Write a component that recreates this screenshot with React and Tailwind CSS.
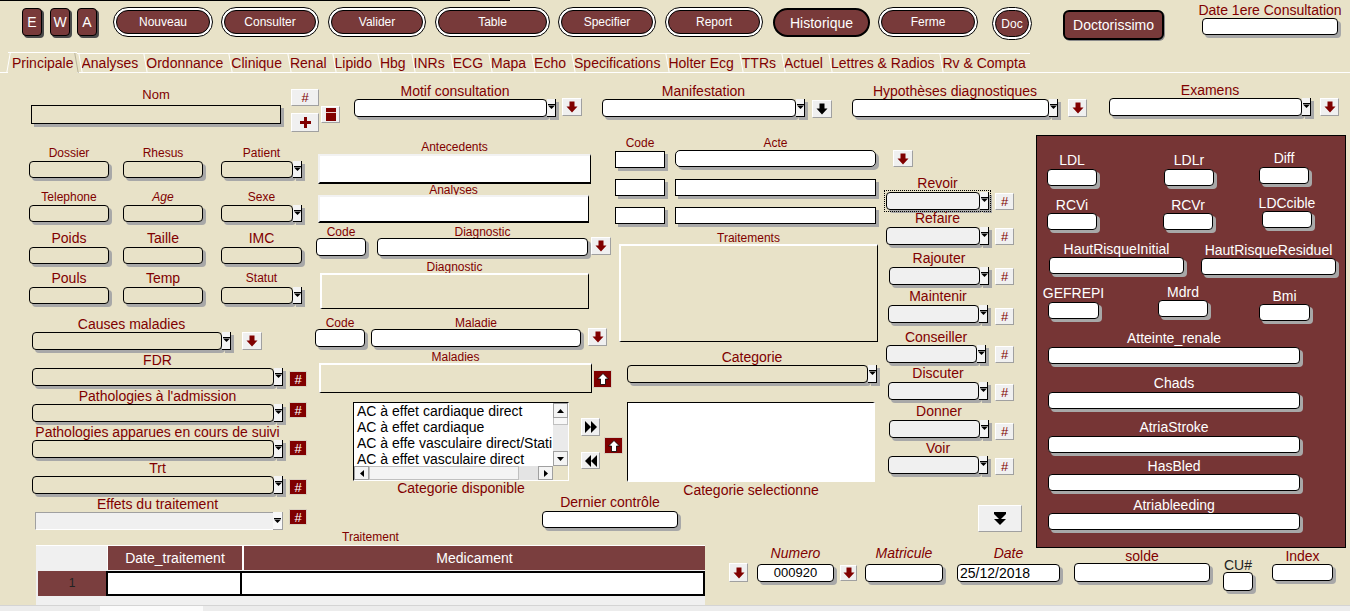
import React from 'react';

const SH = 'shadow-[3px_3px_0_#a8a8a8]';

function Tri() {
  return (
    <svg width="7" height="5" viewBox="0 0 7 5" className="block">
      <rect x="0" y="0" width="7" height="1" fill="#000" />
      <polygon points="0,1.5 7,1.5 3.5,5" fill="#000" />
    </svg>
  );
}

function Combo({ className = '', fill = 'bg-white' }) {
  return (
    <div className={`flex shrink-0 ${className}`}>
      <div className={`flex-1 border border-black rounded-[4px] ${SH} ${fill}`} />
      <div className="w-[9px] flex flex-col items-center pt-[5px] bg-[#f4f4f4] border-r border-b border-black shadow-[3px_3px_0_#a8a8a8]">
        <Tri />
      </div>
    </div>
  );
}

function Down({ color = '#800000' }) {
  return (
    <svg width="12" height="12" viewBox="0 0 12 12" className="block">
      <polygon points="3.5,0.5 8.5,0.5 8.5,5.5 11.5,5.5 6,11.5 0.5,5.5 3.5,5.5" fill={color} />
    </svg>
  );
}

function ArrowBtn({ className = '', color }) {
  return (
    <div className={`shrink-0 flex items-center justify-center bg-[#f0f0f0] border border-white border-r-[#a0a0a0] border-b-[#a0a0a0] ${className}`}>
      <Down color={color} />
    </div>
  );
}

function HashL({ className = '' }) {
  return (
    <div className={`shrink-0 flex items-center justify-center bg-[#f0f0f0] text-[#800000] text-[13px] leading-none border border-white border-r-[#a0a0a0] border-b-[#a0a0a0] ${className}`}>#</div>
  );
}

function HashR({ className = '' }) {
  return (
    <div className={`shrink-0 flex items-center justify-center bg-[#800000] text-white text-[13px] leading-none border border-[#d8d0c0] ${className}`}>#</div>
  );
}

function UpBtn({ className = '' }) {
  return (
    <div className={`shrink-0 flex items-center justify-center bg-[#800000] border border-[#d8d0c0] ${className}`}>
      <svg width="12" height="12" viewBox="0 0 12 12" className="block">
        <polygon points="6,0.5 11.5,6 8.5,6 8.5,11.5 3.5,11.5 3.5,6 0.5,6" fill="#fff" stroke="#000" strokeWidth="0.8" />
      </svg>
    </div>
  );
}

function DblBtn({ className = '', dir }) {
  return (
    <div className={`shrink-0 flex items-center justify-center bg-[#f0f0f0] border border-white border-r-[#a0a0a0] border-b-[#a0a0a0] ${className}`}>
      {dir === 'r' ? (
        <svg width="12" height="12" viewBox="0 0 12 12" className="block">
          <polygon points="0,0 6,6 0,12" fill="#000" />
          <polygon points="6,0 12,6 6,12" fill="#000" />
        </svg>
      ) : (
        <svg width="12" height="12" viewBox="0 0 12 12" className="block">
          <polygon points="12,0 6,6 12,12" fill="#000" />
          <polygon points="6,0 0,6 6,12" fill="#000" />
        </svg>
      )}
    </div>
  );
}

function Key({ className = '', children }) {
  return (
    <div className={`shrink-0 mt-[7px] w-[20px] h-[28px] rounded-[4px] border border-black bg-[#783a3a] text-white text-[14px] flex items-center justify-center shadow-[2px_2px_0_#4a4a4a] ${className}`}>{children}</div>
  );
}

function Pill({ className = '', children }) {
  return (
    <div className={`shrink-0 mt-[6px] rounded-full border border-black bg-white p-[2px] ${className}`}>
      <div className="h-full rounded-full border border-black bg-[#783a3a] flex items-center justify-center text-white text-[12px]">{children}</div>
    </div>
  );
}

function Stack({ className = '', label, lc = '', ic = '' }) {
  return (
    <div className={`shrink-0 flex flex-col items-center ${className}`}>
      <div className={`h-[16px] leading-[16px] whitespace-nowrap ${lc}`}>{label}</div>
      <div className={`w-full shrink-0 border border-black rounded-[4px] bg-white ${SH} ${ic}`} />
    </div>
  );
}

function WideCombo({ className = '', label, hash }) {
  return (
    <div className={`flex items-start ${className}`}>
      <div className="ml-[3px] w-[251px] flex flex-col">
        <div className="h-[16px] flex justify-center whitespace-nowrap">{label}</div>
        <Combo className="h-[18px]" fill="bg-[#e8e2c8]" />
      </div>
      <HashR className={`ml-[6px] w-[18px] h-[16px] -mb-[4px] ${hash}`} />
    </div>
  );
}

function RCombo({ className = '', sc = '', label, hc = '', cc = '', focus }) {
  return (
    <div className={`flex items-start ${className}`}>
      <div className={`flex flex-col shrink-0 ${sc}`}>
        <div className="h-[16px] flex justify-center whitespace-nowrap">{label}</div>
        <div className={focus ? 'outline-1 outline-dotted outline-black outline-offset-1 mt-[1px]' : cc}>
          <Combo className="h-[18px]" fill="bg-[#f0f0f0]" />
        </div>
      </div>
      <HashL className={`w-[19px] h-[17px] -mb-[4px] ${hc}`} />
    </div>
  );
}

export default function App() {
  const tabs = ['Analyses', 'Ordonnance', 'Clinique', 'Renal', 'Lipido', 'Hbg', 'INRs', 'ECG', 'Mapa', 'Echo', 'Specifications', 'Holter Ecg', 'TTRs', 'Actuel', 'Lettres & Radios', 'Rv & Compta'];
  const inBeige = `h-[17px] rounded-[4px] border border-black bg-[#e8e2c8] ${SH}`;
  const inWhiteR = `h-[18px] rounded-[4px] border border-black bg-white ${SH}`;
  const label12 = 'h-[14px] text-[12px] leading-[14px] text-center whitespace-nowrap';
  return (
    <div className="w-[1350px] h-[611px] overflow-hidden bg-[#e8e2c8] font-['Liberation_Sans',Arial,sans-serif] text-[14px] leading-[16px] text-[#800000] flex flex-col">
      {/* toolbar */}
      <div className="h-[48px] shrink-0">
        <div className="h-px w-[510px] bg-black" />
        <div className="flex items-start">
          <Key className="ml-[22px]">E</Key>
          <Key className="ml-[8px]">W</Key>
          <Key className="ml-[7px]">A</Key>
          <Pill className="ml-[16px] w-[100px] h-[30px]">Nouveau</Pill>
          <Pill className="ml-[8px] w-[98px] h-[30px]">Consulter</Pill>
          <Pill className="ml-[9px] w-[98px] h-[30px]">Valider</Pill>
          <Pill className="ml-[9px] w-[115px] h-[30px]">Table</Pill>
          <Pill className="ml-[8px] w-[98px] h-[30px]">Specifier</Pill>
          <Pill className="ml-[9px] w-[98px] h-[30px]">Report</Pill>
          <div className="shrink-0 ml-[10px] mt-[7px] w-[97px] h-[29px] rounded-full border-2 border-black bg-[#783a3a] text-white text-[14px] flex items-center justify-center">Historique</div>
          <Pill className="ml-[8px] w-[100px] h-[30px]">Ferme</Pill>
          <Pill className="ml-[14px] w-[40px] h-[33px]">Doc</Pill>
          <div className="shrink-0 ml-[31px] mt-[9px] w-[101px] h-[30px] rounded-[6px] border-2 border-black bg-[#783a3a] text-white text-[14px] flex items-center justify-center shadow-[1px_1px_0_#8a8a8a]">Doctorissimo</div>
          <div className="shrink-0 ml-[33px] mt-[1px] w-[146px] flex flex-col items-center">
            <div className="h-[16px] whitespace-nowrap">Date 1ere Consultation</div>
            <div className={`w-[136px] h-[17px] rounded-[4px] border border-black bg-white ${SH}`} />
          </div>
        </div>
      </div>

      {/* tabs */}
      <div className="h-[25px] shrink-0 flex items-end pl-[8px] border-b border-white">
        <div className="relative h-[21px] -mb-px pt-[2px] px-[4px] bg-[#e8e2c8] border-t border-white whitespace-nowrap">
          Principale
          <span className="absolute left-0 top-0 h-full w-px bg-white -skew-x-[10deg]" />
          <span className="absolute right-0 top-0 h-full w-px bg-[#b8b29a] skew-x-[10deg]" />
        </div>
        {tabs.map((t) => (
          <div key={t} className="relative h-[19px] pt-[1px] px-[4px] border-t border-white whitespace-nowrap">
            {t}
            <span className="absolute left-[3px] top-0 h-full w-px bg-white skew-x-[10deg]" />
          </div>
        ))}
      </div>

      {/* content */}
      <div className="h-[532px] shrink-0 flex">
        {/* left part */}
        <div className="w-[1036px] shrink-0 flex flex-col">
          {/* row 1 */}
          <div className="h-[62px] shrink-0 flex items-start">
            <div className="shrink-0 ml-[31px] mt-[14px] w-[250px] flex flex-col">
              <div className="h-[16px] text-center text-[13px]">Nom</div>
              <div className={`mt-[2px] h-[19px] border border-black bg-[#e8e2c8] ${SH}`} />
            </div>
            <div className="shrink-0 ml-[10px] mt-[16px] w-[28px] flex flex-col">
              <HashL className="h-[17px]" />
              <div className="mt-[7px] h-[19px] bg-[#f0f0f0] border border-white border-r-[#a0a0a0] border-b-[#a0a0a0] flex items-center justify-center">
                <svg width="11" height="11" viewBox="0 0 11 11" className="block">
                  <rect x="4" y="0" width="3" height="11" fill="#800000" />
                  <rect x="0" y="4" width="11" height="3" fill="#800000" />
                </svg>
              </div>
            </div>
            <div className="shrink-0 ml-[2px] mt-[33px] w-[19px] h-[17px] bg-[#f0f0f0] border border-white border-r-[#a0a0a0] border-b-[#a0a0a0] flex items-center justify-center">
              <svg width="10" height="13" viewBox="0 0 10 13" className="block">
                <rect width="10" height="13" fill="#800000" />
                <rect x="0" y="4" width="10" height="1" fill="#e8c8c8" />
              </svg>
            </div>
            <div className="shrink-0 ml-[14px] mt-[10px] w-[202px] flex flex-col">
              <div className="h-[16px] flex justify-center whitespace-nowrap">Motif consultation</div>
              <Combo className="h-[18px]" fill="bg-white" />
            </div>
            <ArrowBtn className="ml-[6px] mt-[25px] w-[20px] h-[18px]" />
            <div className="shrink-0 ml-[20px] mt-[10px] w-[203px] flex flex-col">
              <div className="h-[16px] flex justify-center whitespace-nowrap">Manifestation</div>
              <Combo className="h-[18px]" fill="bg-white" />
            </div>
            <ArrowBtn className="ml-[7px] mt-[27px] w-[20px] h-[18px]" color="#000" />
            <div className="shrink-0 ml-[20px] mt-[10px] w-[206px] flex flex-col">
              <div className="h-[16px] flex justify-center whitespace-nowrap">Hypothèses diagnostiques</div>
              <Combo className="h-[18px]" fill="bg-white" />
            </div>
            <ArrowBtn className="ml-[10px] mt-[26px] w-[19px] h-[18px]" />
          </div>

          {/* row 2 */}
          <div className="h-[393px] shrink-0 flex items-start">
            {/* col A */}
            <div className="ml-[29px] w-[280px] shrink-0 flex flex-col">
              <div className="mt-[10px] flex items-start">
                <div className="w-[80px] shrink-0 flex flex-col">
                  <div className="h-[16px] text-[12px] text-center">Dossier</div>
                  <div className={inBeige} />
                </div>
                <div className="ml-[14px] w-[80px] shrink-0 flex flex-col">
                  <div className="h-[16px] text-[12px] text-center">Rhesus</div>
                  <div className={inBeige} />
                </div>
                <div className="ml-[18px] w-[81px] shrink-0 flex flex-col">
                  <div className="h-[16px] text-[12px] text-center">Patient</div>
                  <Combo className="h-[17px]" fill="bg-[#e8e2c8]" />
                </div>
              </div>
              <div className="mt-[11px] flex items-start">
                <div className="w-[80px] shrink-0 flex flex-col">
                  <div className="h-[16px] text-[12px] text-center">Telephone</div>
                  <div className={inBeige} />
                </div>
                <div className="ml-[14px] w-[80px] shrink-0 flex flex-col">
                  <div className="h-[16px] text-[12px] text-center italic">Age</div>
                  <div className={inBeige} />
                </div>
                <div className="ml-[18px] w-[81px] shrink-0 flex flex-col">
                  <div className="h-[16px] text-[12px] text-center">Sexe</div>
                  <Combo className="h-[17px]" fill="bg-[#e8e2c8]" />
                </div>
              </div>
              <div className="mt-[8px] flex items-start">
                <div className="w-[80px] shrink-0 flex flex-col">
                  <div className="h-[16px] text-center">Poids</div>
                  <div className={`mt-[1px] ${inBeige}`} />
                </div>
                <div className="ml-[14px] w-[80px] shrink-0 flex flex-col">
                  <div className="h-[16px] text-center">Taille</div>
                  <div className={`mt-[1px] ${inBeige}`} />
                </div>
                <div className="ml-[18px] w-[81px] shrink-0 flex flex-col">
                  <div className="h-[16px] text-center">IMC</div>
                  <div className={`mt-[1px] ${inBeige}`} />
                </div>
              </div>
              <div className="mt-[6px] flex items-start">
                <div className="w-[80px] shrink-0 flex flex-col">
                  <div className="h-[16px] text-center">Pouls</div>
                  <div className={`mt-[1px] ${inBeige}`} />
                </div>
                <div className="ml-[14px] w-[80px] shrink-0 flex flex-col">
                  <div className="h-[16px] text-center">Temp</div>
                  <div className={`mt-[1px] ${inBeige}`} />
                </div>
                <div className="ml-[18px] w-[81px] shrink-0 flex flex-col">
                  <div className="h-[16px] text-[12px] text-center">Statut</div>
                  <Combo className="mt-[1px] h-[17px]" fill="bg-[#e8e2c8]" />
                </div>
              </div>
              <div className="mt-[12px] flex items-start">
                <div className="ml-[3px] w-[199px] shrink-0 flex flex-col">
                  <div className="h-[16px] flex justify-center whitespace-nowrap">Causes maladies</div>
                  <Combo className="h-[18px]" fill="bg-[#e8e2c8]" />
                </div>
                <ArrowBtn className="ml-[11px] mt-[16px] w-[20px] h-[18px]" />
              </div>
              <WideCombo className="mt-[2px]" label="FDR" hash="mt-[19px]" />
              <WideCombo className="mt-[2px]" label="Pathologies à l'admission" hash="mt-[14px]" />
              <WideCombo className="mt-[2px]" label="Pathologies apparues en cours de suivi" hash="mt-[16px]" />
              <WideCombo className="mt-[2px]" label="Trt" hash="mt-[19px]" />
              <div className="mt-[2px] flex items-start">
                <div className="ml-[3px] w-[251px] shrink-0 flex flex-col">
                  <div className="h-[16px] flex justify-center whitespace-nowrap">Effets du traitement</div>
                  <div className="ml-[3px] h-[18px] flex">
                    <div className="flex-1 bg-[#f0f0f0] border-t border-l border-[#a0a0a0] border-b border-b-white" />
                    <div className="w-[10px] flex flex-col items-center pt-[6px] bg-[#f8f8f8] border-b border-r border-[#a0a0a0]">
                      <Tri />
                    </div>
                  </div>
                </div>
                <HashR className="ml-[6px] mt-[13px] w-[18px] h-[16px]" />
              </div>
            </div>

            {/* col B */}
            <div className="ml-[6px] w-[300px] shrink-0 flex flex-col">
              <div className="mt-[5px] ml-[3px] w-[273px] flex flex-col">
                <div className={label12}>Antecedents</div>
                <div className="h-[30px] bg-white border-t-2 border-l-2 border-[#f2f2f2] border-r border-b-2 border-r-black border-b-black" />
              </div>
              <div className="-mt-[1px] ml-[3px] w-[271px] flex flex-col relative">
                <div className={label12}>Analyses</div>
                <div className="-mt-[2px] h-[28px] bg-white border-t-2 border-l-2 border-[#f2f2f2] border-r border-b-2 border-r-black border-b-black" />
              </div>
              <div className="mt-[2px] flex items-start">
                <div className="ml-[1px] w-[50px] shrink-0 flex flex-col">
                  <div className={label12}>Code</div>
                  <div className={`-mt-[1px] ${inWhiteR}`} />
                </div>
                <div className="ml-[11px] w-[211px] shrink-0 flex flex-col">
                  <div className={label12}>Diagnostic</div>
                  <div className={`-mt-[1px] ${inWhiteR}`} />
                </div>
                <ArrowBtn className="ml-[3px] mt-[12px] w-[20px] h-[18px]" />
              </div>
              <div className="mt-[4px] ml-[5px] w-[269px] flex flex-col">
                <div className={label12}>Diagnostic</div>
                <div className="-mt-[1px] h-[36px] bg-[#e8e2c8] border-t-2 border-l-2 border-white border-r border-b border-r-black border-b-black" />
              </div>
              <div className="mt-[7px] flex items-start">
                <div className="w-[50px] shrink-0 flex flex-col">
                  <div className={label12}>Code</div>
                  <div className={`-mt-[1px] ${inWhiteR}`} />
                </div>
                <div className="ml-[6px] w-[210px] shrink-0 flex flex-col">
                  <div className={label12}>Maladie</div>
                  <div className={`-mt-[1px] ${inWhiteR}`} />
                </div>
                <ArrowBtn className="ml-[7px] mt-[12px] w-[19px] h-[18px]" />
              </div>
              <div className="mt-[3px] flex items-start">
                <div className="ml-[4px] w-[273px] shrink-0 flex flex-col">
                  <div className={label12}>Maladies</div>
                  <div className="-mt-[1px] h-[30px] bg-[#e8e2c8] border-t-2 border-l-2 border-white border-r border-b border-r-black border-b-black" />
                </div>
                <UpBtn className="ml-[1px] mt-[20px] w-[19px] h-[18px]" />
              </div>
              <div className="mt-[9px] flex items-start">
                <div className="ml-[38px] w-[216px] h-[79px] shrink-0 flex flex-col bg-white border-t border-l border-black border-r border-b border-r-white border-b-white">
                  <div className="flex flex-1 min-h-0">
                    <div className="flex-1 min-w-0 overflow-hidden whitespace-nowrap pl-[3px] text-black text-[14px] leading-[16px]">
                      <div>AC à effet cardiaque direct</div>
                      <div>AC à effet cardiaque</div>
                      <div>AC à effe vasculaire direct/Stati</div>
                      <div>AC à effet vasculaire direct</div>
                    </div>
                    <div className="w-[15px] shrink-0 flex flex-col bg-[#eaeaea]">
                      <div className="h-[15px] bg-[#f4f4f4] border border-[#a0a0a0] flex items-center justify-center">
                        <svg width="7" height="4" viewBox="0 0 7 4" className="block"><polygon points="0,4 7,4 3.5,0" fill="#000" /></svg>
                      </div>
                      <div className="h-[7px] bg-[#f8f8f8] border-x border-b border-[#c0c0c0]" />
                      <div className="flex-1" />
                      <div className="h-[15px] bg-[#f4f4f4] border border-[#a0a0a0] flex items-center justify-center">
                        <svg width="7" height="4" viewBox="0 0 7 4" className="block"><polygon points="0,0 7,0 3.5,4" fill="#000" /></svg>
                      </div>
                    </div>
                  </div>
                  <div className="h-[14px] shrink-0 flex">
                    <div className="w-[15px] bg-[#f4f4f4] border border-[#a0a0a0] flex items-center justify-center">
                      <svg width="4" height="7" viewBox="0 0 4 7" className="block"><polygon points="4,0 4,7 0,3.5" fill="#000" /></svg>
                    </div>
                    <div className="w-[150px] bg-[#f4f4f4] border border-[#c0c0c0]" />
                    <div className="flex-1 bg-[#e4e4e4]" />
                    <div className="w-[15px] bg-[#f4f4f4] border border-[#a0a0a0] flex items-center justify-center">
                      <svg width="4" height="7" viewBox="0 0 4 7" className="block"><polygon points="0,0 0,7 4,3.5" fill="#000" /></svg>
                    </div>
                    <div className="w-[15px] bg-[#e8e2c8]" />
                  </div>
                </div>
                <div className="ml-[12px] shrink-0 flex flex-col">
                  <DblBtn className="mt-[16px] w-[19px] h-[18px]" dir="r" />
                  <DblBtn className="mt-[16px] w-[19px] h-[17px]" dir="l" />
                </div>
                <UpBtn className="ml-[4px] mt-[35px] w-[19px] h-[17px]" />
              </div>
              <div className="-mt-[1px] ml-[38px] w-[216px] h-[16px] flex justify-center whitespace-nowrap">Categorie disponible</div>
              <div className="-mt-[2px] ml-[227px] w-[136px] shrink-0 flex flex-col">
                <div className="h-[16px] flex justify-center whitespace-nowrap">Dernier contrôle</div>
                <div className={`mt-[1px] h-[17px] rounded-[4px] border border-black bg-white ${SH}`} />
              </div>
            </div>

            {/* col C */}
            <div className="w-[271px] shrink-0 flex flex-col">
              <div className="mt-[1px] flex items-start">
                <div className="w-[50px] shrink-0 flex flex-col">
                  <div className={label12}>Code</div>
                  <div className={`mt-[1px] h-[17px] border border-black bg-white ${SH}`} />
                  <div className={`mt-[11px] h-[17px] border border-black bg-white ${SH}`} />
                  <div className={`mt-[11px] h-[17px] border border-black bg-white ${SH}`} />
                </div>
                <div className="ml-[10px] w-[201px] shrink-0 flex flex-col">
                  <div className={label12}>Acte</div>
                  <div className={`h-[17px] rounded-[5px] border border-black bg-white ${SH}`} />
                  <div className={`mt-[12px] h-[17px] border border-black bg-white ${SH}`} />
                  <div className={`mt-[11px] h-[17px] border border-black bg-white ${SH}`} />
                </div>
              </div>
              <div className="mt-[7px] ml-[4px] w-[259px] flex flex-col">
                <div className={label12}>Traitements</div>
                <div className="-mt-[1px] h-[98px] bg-[#e8e2c8] border-t-2 border-l-2 border-white border-r border-b border-r-black border-b-black" />
              </div>
              <div className="mt-[7px] ml-[12px] w-[250px] flex flex-col">
                <div className="h-[16px] flex justify-center whitespace-nowrap">Categorie</div>
                <Combo className="h-[18px]" fill="bg-[#e8e2c8]" />
              </div>
              <div className="mt-[19px] ml-[12px] w-[248px] h-[80px] bg-white border-t border-l border-black border-r-2 border-b-2 border-r-white border-b-white" />
              <div className="ml-[12px] w-[248px] h-[16px] flex justify-center whitespace-nowrap">Categorie selectionne</div>
            </div>

            {/* col D */}
            <div className="w-[150px] shrink-0 flex flex-col">
              <ArrowBtn className="ml-[7px] mt-[15px] w-[20px] h-[17px]" />
              <RCombo className="mt-[8px]" sc="w-[103px]" label="Revoir" hc="ml-[6px] mt-[18px]" focus />
              <RCombo className="mt-0" sc="w-[103px]" label="Refaire" cc="mt-[1px]" hc="ml-[6px] mt-[18px]" />
              <RCombo className="mt-[5px]" sc="ml-[3px] w-[100px]" label="Rajouter" cc="mt-[1px]" hc="ml-[6px] mt-[18px]" />
              <RCombo className="mt-[3px]" sc="ml-[2px] w-[100px]" label="Maintenir" cc="mt-[1px]" hc="ml-[7px] mt-[20px]" />
              <RCombo className="mt-[6px]" sc="w-[100px]" label="Conseiller" cc="mt-0" hc="ml-[9px] mt-[17px]" />
              <RCombo className="mt-[2px]" sc="ml-[2px] w-[100px]" label="Discuter" cc="mt-[1px]" hc="ml-[7px] mt-[19px]" />
              <RCombo className="mt-[3px]" sc="ml-[3px] w-[100px]" label="Donner" cc="mt-[1px]" hc="ml-[6px] mt-[20px]" />
              <RCombo className="mt-[2px]" sc="ml-[2px] w-[100px]" label="Voir" cc="mt-0" hc="ml-[7px] mt-[18px]" />
              <div className="ml-[92px] mt-[31px] w-[44px] h-[27px] bg-[#f0f0f0] border border-white border-r-[#a0a0a0] border-b-[#a0a0a0] flex items-center justify-center">
                <svg width="14" height="14" viewBox="0 0 14 14" className="block">
                  <rect x="1" y="0" width="12" height="2" fill="#000" />
                  <polygon points="1,2 13,2 7,8" fill="#000" />
                  <polygon points="1,7 13,7 7,13" fill="#000" />
                </svg>
              </div>
            </div>
          </div>

          {/* row 3 */}
          <div className="h-[77px] shrink-0 flex items-start">
            <div className="ml-[36px] w-[669px] shrink-0 flex flex-col">
              <div className={`mt-[2px] ${label12}`}>Traitement</div>
              <div className="mt-[1px] h-[60px] bg-[#f0f0f0] border-t border-white flex flex-col">
                <div className="h-[24px] flex">
                  <div className="w-[71px]" />
                  <div className="w-[135px] bg-[#7a3e3e] border-l border-white text-white text-center leading-[24px]">Date_traitement</div>
                  <div className="flex-1 bg-[#7a3e3e] border-l-2 border-white text-white text-center leading-[24px]">Medicament</div>
                </div>
                <div className="mt-px h-[25px] flex">
                  <div className="ml-[2px] w-[68px] bg-[#7a3e3e] text-[#222] text-[12px] text-center leading-[25px]">1</div>
                  <div className="w-[136px] bg-white border-2 border-black" />
                  <div className="flex-1 bg-white border-y-2 border-r-2 border-black" />
                </div>
              </div>
            </div>
            <ArrowBtn className="ml-[24px] mt-[35px] w-[19px] h-[19px]" />
            <div className="ml-[9px] mt-[17px] w-[77px] shrink-0 flex flex-col">
              <div className="h-[16px] text-center italic">Numero</div>
              <div className={`mt-[3px] h-[18px] rounded-[4px] border border-black bg-white text-black text-[13px] leading-[16px] text-center ${SH}`}>000920</div>
            </div>
            <ArrowBtn className="ml-[6px] mt-[37px] w-[17px] h-[16px]" />
            <div className="ml-[8px] mt-[17px] w-[78px] shrink-0 flex flex-col">
              <div className="h-[16px] text-center italic">Matricule</div>
              <div className={`mt-[3px] h-[18px] rounded-[4px] border border-black bg-white ${SH}`} />
            </div>
            <div className="ml-[14px] mt-[17px] w-[103px] shrink-0 flex flex-col">
              <div className="h-[16px] text-center italic">Date</div>
              <div className={`mt-[3px] h-[18px] rounded-[4px] border border-black bg-white text-black text-[14px] leading-[16px] pl-[2px] ${SH}`}>25/12/2018</div>
            </div>
          </div>
        </div>

        {/* right part */}
        <div className="w-[314px] shrink-0 flex flex-col">
          <div className="h-[62px] shrink-0 flex items-start">
            <div className="shrink-0 ml-[73px] mt-[9px] w-[202px] flex flex-col">
              <div className="h-[16px] flex justify-center whitespace-nowrap">Examens</div>
              <Combo className="h-[18px]" fill="bg-white" />
            </div>
            <ArrowBtn className="ml-[9px] mt-[25px] w-[19px] h-[18px]" />
          </div>

          <div className="w-[310px] h-[413px] shrink-0 bg-[#763535] border border-black text-white flex flex-col">
            <div className="flex items-start">
              <Stack className="ml-[10px] mt-[16px] w-[50px]" label="LDL" ic="mt-[1px] h-[17px]" />
              <Stack className="ml-[67px] mt-[16px] w-[50px]" label="LDLr" ic="mt-[1px] h-[17px]" />
              <Stack className="ml-[45px] mt-[14px] w-[50px]" label="Diff" ic="mt-[1px] h-[17px]" />
            </div>
            <div className="flex items-start">
              <Stack className="ml-[10px] mt-[11px] w-[50px]" label="RCVi" ic="h-[17px]" />
              <Stack className="ml-[66px] mt-[11px] w-[50px]" label="RCVr" ic="h-[17px]" />
              <Stack className="ml-[49px] mt-[9px] w-[50px]" label="LDCcible" ic="h-[17px]" />
            </div>
            <div className="flex items-start">
              <Stack className="ml-[12px] mt-[11px] w-[135px]" label="HautRisqueInitial" ic="h-[17px]" />
              <Stack className="ml-[17px] mt-[12px] w-[135px]" label="HautRisqueResiduel" ic="h-[17px]" />
            </div>
            <div className="flex items-start">
              <Stack className="ml-[11px] mt-[10px] w-[51px]" label="GEFREPI" ic="mt-[1px] h-[17px]" />
              <Stack className="ml-[59px] mt-[9px] w-[50px]" label="Mdrd" ic="h-[17px]" />
              <Stack className="ml-[51px] mt-[13px] w-[51px]" label="Bmi" ic="h-[17px]" />
            </div>
            <Stack className="ml-[11px] mt-[9px] w-[252px]" label="Atteinte_renale" ic="mt-[1px] h-[17px]" />
            <Stack className="ml-[11px] mt-[11px] w-[252px]" label="Chads" ic="mt-[1px] h-[17px]" />
            <Stack className="ml-[11px] mt-[10px] w-[252px]" label="AtriaStroke" ic="mt-[1px] h-[17px]" />
            <Stack className="ml-[11px] mt-[5px] w-[252px]" label="HasBled" ic="h-[17px]" />
            <Stack className="ml-[11px] mt-[6px] w-[252px]" label="Atriableeding" ic="h-[17px]" />
          </div>

          <div className="h-[57px] shrink-0 flex items-start">
            <Stack className="ml-[38px] w-[136px]" label="solde" ic="-mt-[1px] h-[19px]" />
            <Stack className="ml-[13px] mt-[9px] w-[30px]" label="CU#" lc="text-[#222]" ic="-mt-[1px] h-[19px]" />
            <Stack className="ml-[19px] w-[61px]" label="Index" ic="h-[17px]" />
          </div>
        </div>
      </div>

      {/* bottom strip */}
      <div className="h-[6px] shrink-0 flex bg-[#ececec] border-t border-[#d4d4d4]">
        <div className="ml-[100px] w-[103px] bg-[#fbfbfb]" />
      </div>
    </div>
  );
}
